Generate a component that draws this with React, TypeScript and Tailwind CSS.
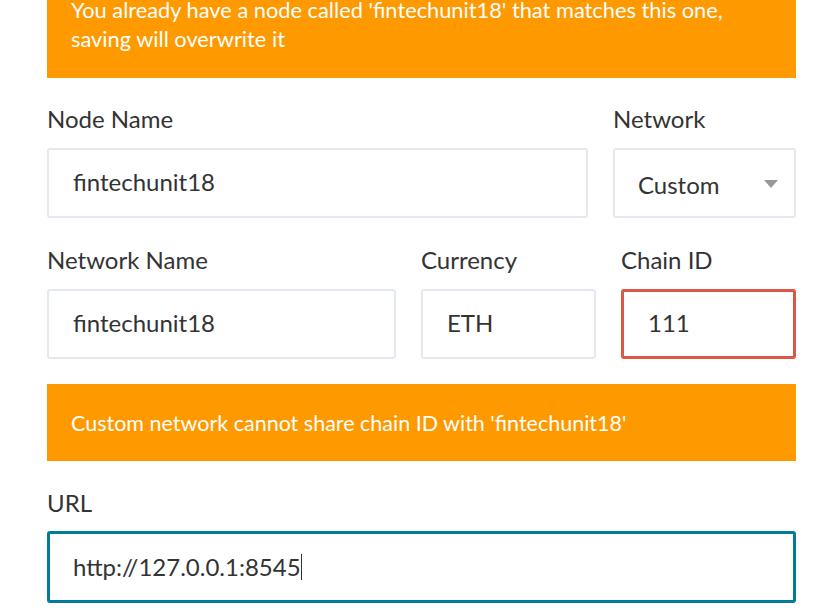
import React from 'react';

const font = { fontFamily: 'Lato, "Open Sans", sans-serif' };

const Label: React.FC<{ children: React.ReactNode }> = ({ children }) => (
  <div className="text-[24px] leading-[28px] text-[#333333] mb-[15px]">{children}</div>
);

const Field: React.FC<{ value: string; className?: string; border?: string }> = ({ value, className = '', border = 'border-2 border-[#e4e9f1]' }) => (
  <div className={`h-[70px] rounded-[3px] bg-white flex items-center pl-[24px] pb-[2px] text-[24px] text-[#333333] ${border} ${className}`}>
    {value}
  </div>
);

export default function App() {
  return (
    <div className="min-h-screen bg-white overflow-hidden" style={font}>
      <div className="ml-[47px] w-[749px]">
        {/* duplicate node warning */}
        <div className="-mt-[22px] bg-[#ff9900] text-white text-[21.8px] leading-[29px] pt-[17px] pb-[25px] px-[24px]">
          You already have a node called 'fintechunit18' that matches this one,
          <br />
          saving will overwrite it
        </div>

        {/* node name + network */}
        <div className="flex gap-[25px] mt-[27px]">
          <div className="w-[541px]">
            <Label>Node Name</Label>
            <Field value="fintechunit18" />
          </div>
          <div className="flex-1">
            <Label>Network</Label>
            <div className="h-[70px] rounded-[3px] border-2 border-[#e4e9f1] flex items-center justify-between pl-[23px] pr-[16px] text-[24px] text-[#333333]">
              <span className="mt-[3px]">Custom</span>
              <svg width="14" height="8" viewBox="0 0 14 8" className="mt-[2px]">
                <path d="M0 0 H14 L7 8 Z" fill="#999999" />
              </svg>
            </div>
          </div>
        </div>

        {/* network name / currency / chain id */}
        <div className="flex gap-[25px] mt-[28px]">
          <div className="w-[349px]">
            <Label>Network Name</Label>
            <Field value="fintechunit18" />
          </div>
          <div className="w-[175px]">
            <Label>Currency</Label>
            <Field value="ETH" />
          </div>
          <div className="w-[175px]">
            <Label>Chain ID</Label>
            <Field value="111" border="border-[3px] border-[#dd5746]" className="pl-[23px]" />
          </div>
        </div>

        <div className="mt-[25px] h-[77px] bg-[#ff9900] text-white text-[21.5px] flex items-center px-[24px] pt-[2px]">
          Custom network cannot share chain ID with 'fintechunit18'
        </div>

        <div className="mt-[28px]">
          <Label>URL</Label>
          <div className="-mt-[1px] h-[72px] rounded-[3px] border-[3px] border-[#027b98] flex items-center pl-[23px] text-[24px] text-[#333333]">
            <span>http://127.0.0.1:8545</span>
            <span className="inline-block w-px h-[26px] bg-[#333333]" />
          </div>
        </div>
      </div>
    </div>
  );
}
